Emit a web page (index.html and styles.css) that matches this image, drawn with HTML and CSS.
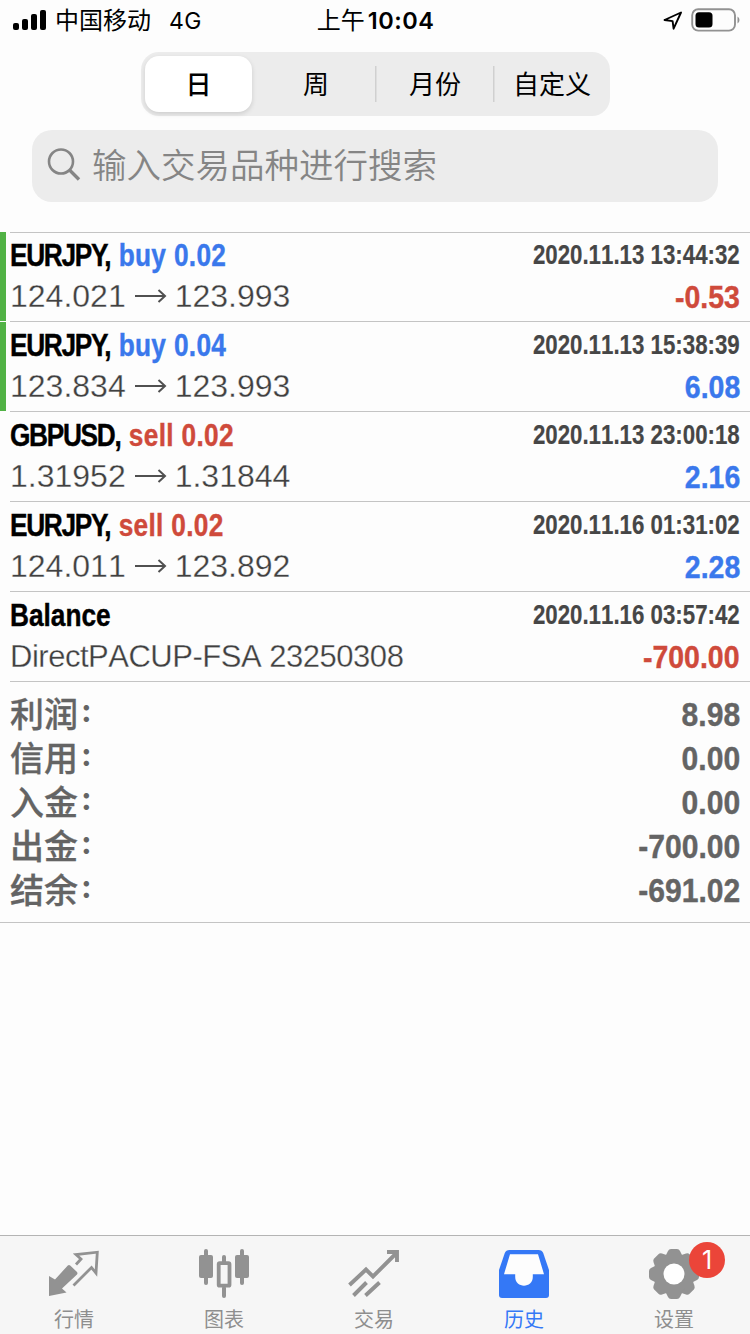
FILE: index.html
```html
<!DOCTYPE html>
<html lang="zh-CN">
<head>
<meta charset="utf-8">
<title>历史</title>
<link rel="stylesheet" href="styles.css">
</head>
<body>
<div class="app">
  <header class="status">
    <div class="status-left">
      <svg class="signal" width="34" height="22" viewBox="0 0 34 22"><rect x="0" y="13" width="6" height="7" rx="2"/><rect x="9" y="9" width="6" height="11" rx="2"/><rect x="18" y="4" width="6" height="16" rx="2"/><rect x="27" y="0" width="6" height="20" rx="2"/></svg>
      <span class="carrier">中国移动</span><span class="network">4G</span>
    </div>
    <div class="time"><span class="ampm">上午</span>10:04</div>
    <div class="status-right">
      <svg width="20" height="20" viewBox="0 0 20 20" fill="none" stroke="#000" stroke-width="1.9" stroke-linejoin="round"><path d="M1.500 9 18 1.500 10.600 17.700 9.600 10.100Z"/></svg>
      <svg class="battery" width="50" height="24" viewBox="0 0 50 24"><rect x="1.200" y="0.200" width="42.800" height="21.400" rx="6" fill="none" stroke="#929292" stroke-width="1.900"/><rect x="4.500" y="3.300" width="17" height="15.200" rx="3.500"/><path d="M46.500 7.500q2 1 2 3.500t-2 3.500z" fill="#929292"/></svg>
    </div>
  </header>

  <nav class="segments">
    <span class="segment selected">日</span><span class="segment week">周</span><span class="segment divided">月份</span><span class="segment divided">自定义</span>
  </nav>

  <div class="search">
    <svg width="36" height="36" viewBox="0 0 36 36" fill="none" stroke="#858585"><circle cx="14" cy="13.500" r="12" stroke-width="2.600"/><path d="M22.500 22 32 31.500" stroke-width="3.400"/></svg>
    <span>输入交易品种进行搜索</span>
  </div>

  <main class="deals">
    <section class="deal open">
      <div class="line"><span class="title"><span class="symbol">EURJPY, </span><span class="side buy">buy 0.02</span></span><span class="date">2020.11.13 13:44:32</span></div>
      <div class="line second"><span class="prices">124.021<svg class="arrow" viewBox="0 0 32 16"><path d="M0 8H30M23.500 2 30 8 23.500 14"/></svg>123.993</span><span class="profit loss">-0.53</span></div>
    </section>
    <section class="deal open">
      <div class="line"><span class="title"><span class="symbol">EURJPY, </span><span class="side buy">buy 0.04</span></span><span class="date">2020.11.13 15:38:39</span></div>
      <div class="line second"><span class="prices">123.834<svg class="arrow" viewBox="0 0 32 16"><path d="M0 8H30M23.500 2 30 8 23.500 14"/></svg>123.993</span><span class="profit gain">6.08</span></div>
    </section>
    <section class="deal">
      <div class="line"><span class="title"><span class="symbol">GBPUSD, </span><span class="side sell">sell 0.02</span></span><span class="date">2020.11.13 23:00:18</span></div>
      <div class="line second"><span class="prices">1.31952<svg class="arrow" viewBox="0 0 32 16"><path d="M0 8H30M23.500 2 30 8 23.500 14"/></svg>1.31844</span><span class="profit gain">2.16</span></div>
    </section>
    <section class="deal">
      <div class="line"><span class="title"><span class="symbol">EURJPY, </span><span class="side sell">sell 0.02</span></span><span class="date">2020.11.16 01:31:02</span></div>
      <div class="line second"><span class="prices">124.011<svg class="arrow" viewBox="0 0 32 16"><path d="M0 8H30M23.500 2 30 8 23.500 14"/></svg>123.892</span><span class="profit gain">2.28</span></div>
    </section>
    <section class="deal">
      <div class="line"><span class="title">Balance</span><span class="date">2020.11.16 03:57:42</span></div>
      <div class="line second"><span class="prices comment">DirectPACUP-FSA 23250308</span><span class="profit loss">-700.00</span></div>
    </section>
  </main>

  <section class="summary">
    <div class="total"><span>利润</span><i>:</i><b>8.98</b></div>
    <div class="total"><span>信用</span><i>:</i><b>0.00</b></div>
    <div class="total"><span>入金</span><i>:</i><b>0.00</b></div>
    <div class="total"><span>出金</span><i>:</i><b>-700.00</b></div>
    <div class="total"><span>结余</span><i>:</i><b>-691.02</b></div>
  </section>

  <footer class="tabs">
    <div class="tab">
      <svg viewBox="0 0 52 52"><path fill="#929292" d="M0 27 6 30.500 18.800 16.500Q20 15.300 21.200 16.500L28 23Q29 24.300 28 25.500L13 39.500 17.500 43.500 0 47Z"/><path fill="none" stroke="#929292" stroke-width="2.800" d="M27 15.500 32 10 27 5.500 48.300 3.200 47 24 42.500 18.500 24.500 36.500"/></svg>
      <span>行情</span>
    </div>
    <div class="tab">
      <svg viewBox="0 0 52 52" fill="#929292"><rect x="0" y="6" width="14" height="23" rx="2"/><rect x="5" y="0" width="4" height="36" rx="2"/><rect x="36" y="6" width="14" height="23" rx="2"/><rect x="41" y="0" width="4" height="36" rx="2"/><rect x="19.700" y="14.200" width="10.800" height="22.500" rx="1" fill="none" stroke="#929292" stroke-width="3.800"/><rect x="23" y="6" width="4" height="9" rx="2"/><rect x="23" y="37" width="4" height="12" rx="2"/></svg>
      <span>图表</span>
    </div>
    <div class="tab">
      <svg viewBox="0 0 52 52" fill="none" stroke="#929292" stroke-width="3.900"><path d="M0.500 36 17 20.500 24 27.500 47.500 4M38 3H48V13M4.500 46.500 17.500 33.500M16.500 46.500 30.500 33.500"/></svg>
      <span>交易</span>
    </div>
    <div class="tab active">
      <svg viewBox="0 0 52 52"><path fill="#3478f6" d="M10.500 1H39.500Q43 1 44.200 4L50 21V46Q50 49 47 49H3Q0 49 0 46V21L5.800 4Q7 1 10.500 1Z"/><path fill="#fdfdfd" d="M11 5.200 5 25.200H16.200V28C16.200 39.500 33.800 39.500 33.800 28V25.200H45L39 5.200Z"/></svg>
      <span>历史</span>
    </div>
    <div class="tab">
      <svg viewBox="0 0 52 52"><g fill="#929292" transform="translate(25 25)"><circle r="20.500"/><path id="tooth" d="M-8.500 -18 -6 -23Q-5 -25 -3 -25H3Q5 -25 6 -23L8.500 -18Z"/><use href="#tooth" transform="rotate(45)"/><use href="#tooth" transform="rotate(90)"/><use href="#tooth" transform="rotate(135)"/><use href="#tooth" transform="rotate(180)"/><use href="#tooth" transform="rotate(225)"/><use href="#tooth" transform="rotate(270)"/><use href="#tooth" transform="rotate(315)"/><circle r="10.500" fill="#fff"/></g></svg>
      <span>设置</span>
      <em class="badge">1</em>
    </div>
  </footer>
</div>
</body>
</html>
```
FILE: styles.css
```css
* { box-sizing: border-box; }
body { margin: 0; background: #fdfdfd; font-family: "Liberation Sans", "Noto Sans CJK SC", sans-serif; }
.app { width: 750px; height: 1334px; display: flex; flex-direction: column; overflow: hidden; }
svg { display: block; flex: none; }

.status { height: 40px; padding: 0 12px 0 13px; display: grid; grid-template-columns: 1fr auto 1fr; align-items: center; font-family: Inter, "Noto Sans CJK SC", sans-serif; font-size: 24px; line-height: 40px; }
.status-left { display: flex; align-items: center; }
.status-left span, .time { padding-top: 1px; }
.carrier { margin-left: 8px; }
.network { margin-left: 18px; font-size: 23px; letter-spacing: 0.3px; }
.time { font-weight: 600; font-size: 23.5px; letter-spacing: 0.5px; }
.ampm { font-weight: 400; font-size: 24px; letter-spacing: 0; margin-right: 3px; }
.status-right { display: flex; align-items: center; justify-content: flex-end; gap: 8px; }
.battery { margin-right: -3px; overflow: visible; }

.segments { width: 469px; height: 64px; margin: 12px 0 0 141px; padding: 4px; border-radius: 18px; background: #ececec; display: grid; grid-template-columns: 107px 123px 118px 1fr; line-height: 54px; font-size: 26px; text-align: center; font-family: "Noto Sans CJK SC", sans-serif; flex: none; }
.segment { display: flex; justify-content: center; }
.selected { background: #fff; border-radius: 14px; font-weight: 500; box-shadow: 0 2px 5px #0002; }
.week { padding-left: 5px; }
.divided { padding-left: 2px; background: linear-gradient(#d0d0d0, #d0d0d0) 0 10px / 1.5px 36px no-repeat; }
.divided:last-child { padding-left: 5px; }

.search { height: 72px; margin: 14px 32px 0; padding: 0 15px; border-radius: 20px; background: #ececec; display: flex; align-items: center; gap: 9px; font: 34.5px/68px "Noto Sans CJK SC", sans-serif; color: #858585; flex: none; }
.search span { font-weight: 350; margin-top: -6px; }

.deals { margin-top: 30px; background: linear-gradient(#c4c4c4, #c4c4c4) 10px 0 / 100% 1px no-repeat; }
.deal { height: 90px; padding: 0 10px; background: linear-gradient(#c4c4c4, #c4c4c4) 10px 100% / 100% 1px no-repeat; }
.deal.open { background: linear-gradient(#51b245, #51b245) 0 0 / 6px 89px no-repeat, linear-gradient(#c4c4c4, #c4c4c4) 10px 100% / 100% 1px no-repeat; }
.line { height: 44px; padding-top: 1px; display: flex; justify-content: space-between; align-items: center; white-space: pre; line-height: 44px; }
.second { height: 42px; line-height: 42px; padding: 0; }
.title { font-weight: bold; font-size: 32px; transform: scaleX(.82); transform-origin: left; -webkit-text-stroke: .4px; }
.symbol { letter-spacing: -1.6px; margin-right: 3px; }
.side { letter-spacing: .4px; }
.buy, .gain { color: #3a78ec; }
.sell, .loss { color: #cf4a3b; }
.date { color: #464646; font-size: 27px; font-weight: bold; transform: scaleX(.825); transform-origin: right; padding-top: 1px; font-kerning: none; -webkit-text-stroke: .2px; }
.prices { color: #404040; font-size: 32px; display: flex; align-items: center; margin-top: -2px; font-kerning: none; -webkit-text-stroke: .3px #fdfdfd; }
.comment { font-size: 31px; letter-spacing: -.48px; margin-top: 0; }
.arrow { width: 32px; height: 16px; margin: 0 8px 0 9px; fill: none; stroke: #505050; stroke-width: 2; }
.profit { font-size: 32px; font-weight: bold; transform: scaleX(.89); transform-origin: right; -webkit-text-stroke: .4px; }

.summary { height: 241px; padding: 9px 10px 0; border-bottom: 1px solid #c4c4c4; color: #646464; flex: none; }
.total { display: flex; height: 44px; line-height: 44px; font-size: 34px; }
.total span { font-weight: 500; padding-top: 2px; -webkit-text-stroke: .3px; }
.total i { font: 700 32px/39px Inter, sans-serif; margin-left: 3px; }
.total b { margin-left: auto; transform: scaleX(.885); transform-origin: right; padding-top: 1px; -webkit-text-stroke: .4px; }

.tabs { margin-top: auto; height: 99px; border-top: 1px solid #b4b4b4; background: #f6f6f6; display: grid; grid-template-columns: repeat(5, 150px); flex: none; }
.tab { position: relative; padding: 13px 0 0 49px; color: #8e8e8e; }
.tab svg { width: 52px; height: 52px; overflow: visible; }
.tab span { display: block; margin-left: 5px; padding-top: 1px; font: 20px/34px "Noto Sans CJK SC", sans-serif; }
.active { color: #3478f6; }
.badge { position: absolute; left: 89px; top: 6px; width: 36px; height: 36px; border-radius: 50%; background: #eb4539; color: #fff; font: 25px/36px Inter, sans-serif; text-align: center; }
```
